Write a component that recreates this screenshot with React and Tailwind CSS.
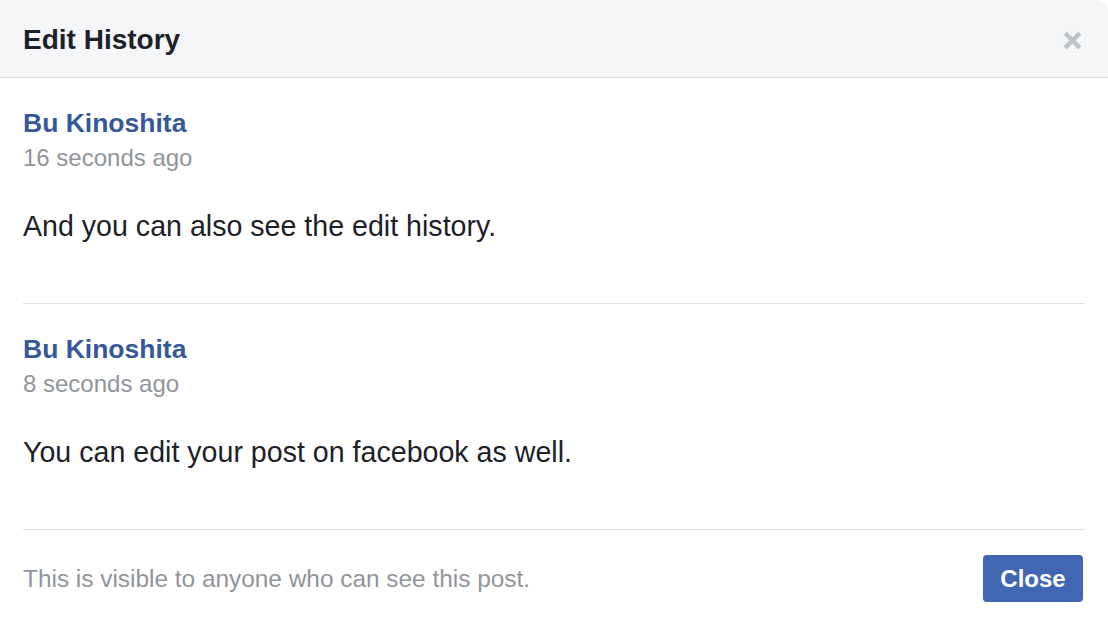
const ENTRIES = [
  { id: 1, name: 'Bu Kinoshita', time: '16 seconds ago', text: 'And you can also see the edit history.' },
  { id: 2, name: 'Bu Kinoshita', time: '8 seconds ago', text: 'You can edit your post on facebook as well.' },
]

function CloseIcon() {
  return (
    <svg width="21" height="21" viewBox="0 0 20 20" aria-hidden="true">
      <path d="M3 3 L17 17 M17 3 L3 17" stroke="#bec2c9" strokeWidth="4.2" strokeLinecap="butt" />
    </svg>
  )
}

export default function App() {
  return (
    <div className="w-[1108px] h-[626px] bg-white font-['Liberation_Sans',Arial,sans-serif] overflow-hidden">
      <div className="flex items-center justify-between h-[78px] px-[23px] bg-[#f5f6f7] border-b border-[#dddfe2] rounded-tr-[12px]">
        <h1 className="text-[28px] leading-[34px] font-bold text-[#1d2129] pt-[3px]">Edit History</h1>
        <button className="flex items-center justify-center w-[24px] h-[24px] mr-[1px] mt-[4px]">
          <CloseIcon />
        </button>
      </div>

      <div className="px-[23px]">
        {ENTRIES.map((entry) => (
          <div key={entry.id} className="pt-[28px] pb-[59px] border-b border-[#dddfe2]">
            <p className="text-[26.5px] leading-[34px] font-bold text-[#365899]">{entry.name}</p>
            <p className="text-[24px] leading-[35px] text-[#90949c]">{entry.time}</p>
            <p className="mt-[33px] text-[28.6px] leading-[36px] text-[#1d2129]">{entry.text}</p>
          </div>
        ))}

        <div className="flex items-center justify-between pt-[25px] pb-[24px]">
          <p className="text-[24.4px] leading-[32px] text-[#90949c]">This is visible to anyone who can see this post.</p>
          <button className="h-[47px] w-[100px] mr-[2px] rounded-[4px] bg-[#4267b2] text-[24px] font-bold text-white">
            Close
          </button>
        </div>
      </div>
    </div>
  )
}
